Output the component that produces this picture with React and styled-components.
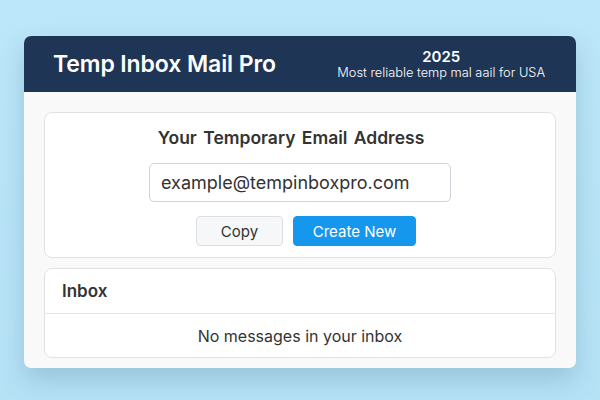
import React from 'react';
import styled, { createGlobalStyle } from 'styled-components';

const GlobalStyle = createGlobalStyle`
  html, body {
    margin: 0;
    padding: 0;
  }
  body {
    font-family: Inter, "Noto Sans", "Liberation Sans", sans-serif;
    background: linear-gradient(180deg, #bce6f9 0%, #b6e2f6 100%);
    width: 600px;
    height: 400px;
    overflow: hidden;
  }
`;

const Page = styled.div`
  padding: 36px 24px 0;
`;

const Window = styled.div`
  background-color: #f9f9fa;
  border-radius: 7px;
  overflow: hidden;
  box-shadow: 0 12px 24px rgba(60, 110, 140, 0.25);
`;

const Header = styled.header`
  display: flex;
  align-items: center;
  justify-content: space-between;
  height: 56px;
  padding: 0 31px 0 29px;
  background-color: #1e3556;
  color: #fff;
`;

const Title = styled.h1`
  margin: 0;
  font-size: 23px;
  font-weight: 600;
  letter-spacing: -0.1px;
`;

const Tagline = styled.div`
  display: flex;
  flex-direction: column;
  align-items: center;
  line-height: 1;
`;

const Year = styled.span`
  font-size: 15px;
  font-weight: 600;
  margin-bottom: 1px;
`;

const Sub = styled.span`
  font-size: 12.8px;
  font-weight: 300;
  margin-top: 2px;
`;

const Body = styled.main`
  display: flex;
  flex-direction: column;
  gap: 10px;
  padding: 20px 20px 10px;
`;

const Card = styled.section`
  background-color: #fff;
  border: 1px solid #dde1e6;
  border-radius: 8px;
`;

const AddressCard = styled(Card)`
  display: flex;
  flex-direction: column;
  align-items: center;
  padding: 14px 0 11px;
`;

const CardTitle = styled.h2`
  margin: 0;
  padding-right: 18px;
  font-size: 17.5px;
  font-weight: 600;
  word-spacing: 2px;
  color: #333;
  line-height: 22px;
`;

const Address = styled.div`
  box-sizing: border-box;
  width: 302px;
  height: 39px;
  margin-top: 14px;
  padding: 0 11px;
  display: flex;
  align-items: center;
  border: 1px solid #cfd4da;
  border-radius: 5px;
  font-size: 18px;
  color: #333;
`;

const Actions = styled.div`
  display: flex;
  gap: 10px;
  margin-top: 14px;
  margin-left: 12px;
`;

const Button = styled.button`
  height: 30px;
  width: ${(p) => p.width}px;
  border-radius: 4px;
  font-family: inherit;
  font-size: 15px;
  border: 1px solid ${(p) => (p.primary ? '#1597ee' : '#dcdfe3')};
  background-color: ${(p) => (p.primary ? '#1597ee' : '#f6f7f8')};
  color: ${(p) => (p.primary ? '#fff' : '#333')};
  cursor: pointer;
`;

const InboxCard = styled(Card)`
  display: flex;
  flex-direction: column;
`;

const InboxHead = styled.div`
  height: 44px;
  display: flex;
  align-items: center;
  padding: 0 17px;
  font-size: 17px;
  font-weight: 600;
  color: #333;
  border-bottom: 1px solid #e4e7eb;
`;

const Empty = styled.div`
  height: 43px;
  display: flex;
  align-items: center;
  justify-content: center;
  font-size: 16px;
  color: #333;
`;

export default function App() {
  return (
    <>
      <GlobalStyle />
      <Page>
        <Window>
          <Header>
            <Title>Temp Inbox Mail Pro</Title>
            <Tagline>
              <Year>2025</Year>
              <Sub>Most reliable temp mal aail for USA</Sub>
            </Tagline>
          </Header>
          <Body>
            <AddressCard>
              <CardTitle>Your Temporary Email Address</CardTitle>
              <Address>example@tempinboxpro.com</Address>
              <Actions>
                <Button width={87}>Copy</Button>
                <Button width={123} primary>Create New</Button>
              </Actions>
            </AddressCard>
            <InboxCard>
              <InboxHead>Inbox</InboxHead>
              <Empty>No messages in your inbox</Empty>
            </InboxCard>
          </Body>
        </Window>
      </Page>
    </>
  );
}
